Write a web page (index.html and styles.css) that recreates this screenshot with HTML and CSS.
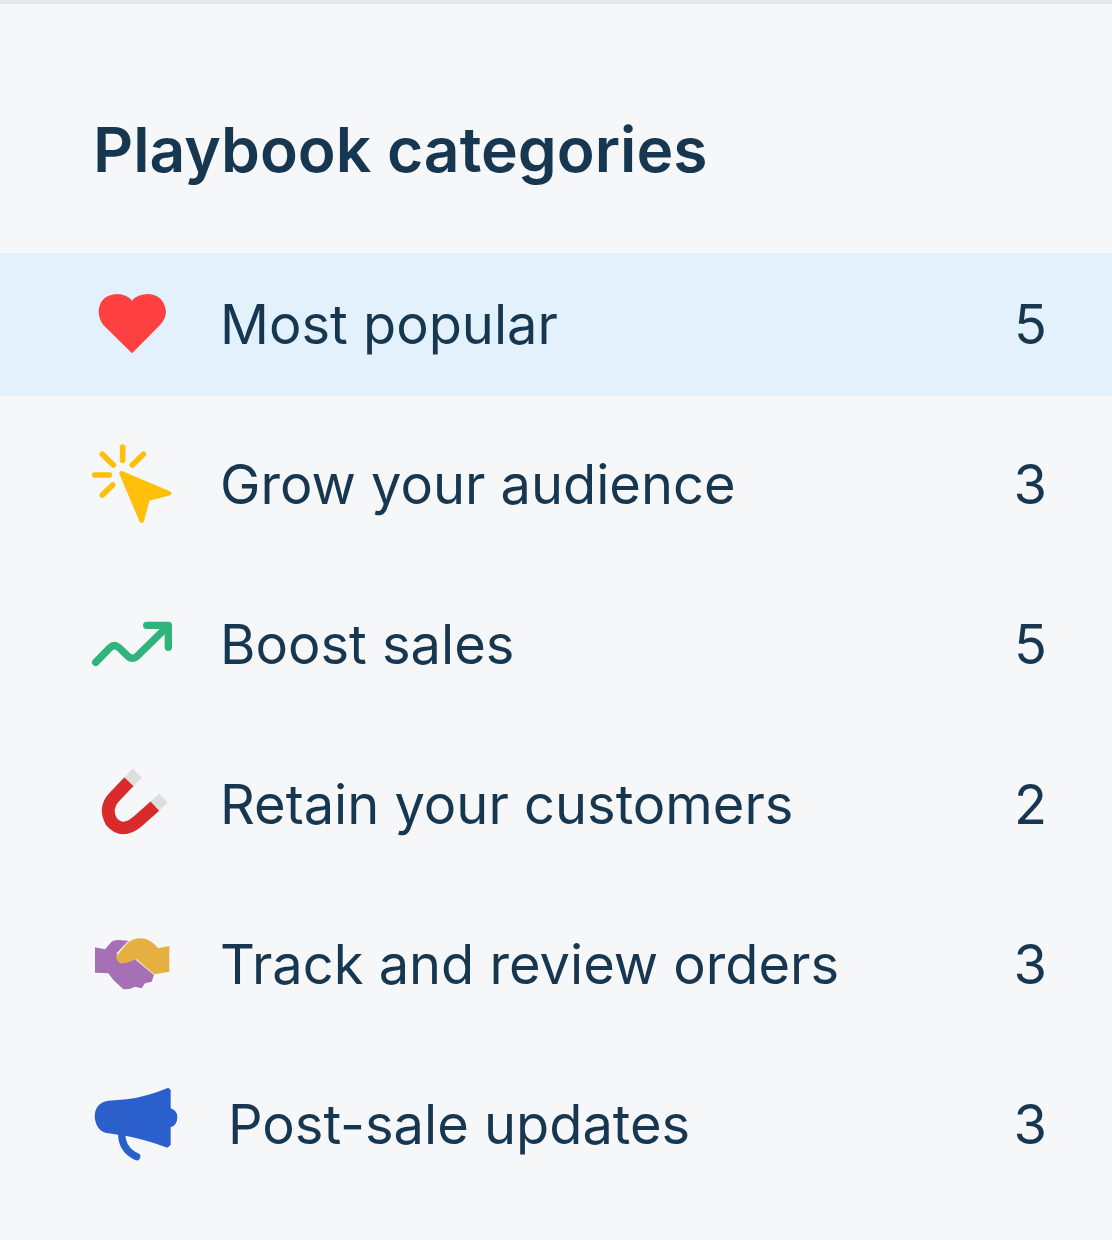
FILE: index.html
```html
<!DOCTYPE html>
<html lang="en">
<head>
    <meta charset="UTF-8">
    <title>Playbook categories</title>
    <link rel="stylesheet" href="styles.css">
</head>
<body>

    <aside class="sidebar">
        <h2>Playbook categories</h2>
        <ul class="category-list">
            <li class="category active">
                <svg class="icon" viewBox="36 45 240 240"><path fill="#ff4040" d="M156 250 L70 165 Q55 145 56 120 Q62 75 110 72 Q140 72 156 92 Q172 72 205 72 Q252 75 258 125 Q258 145 240 165 Z"/></svg>
                <span class="name">Most popular</span>
                <span class="count">5</span>
            </li>
            <li class="category">
                <svg class="icon" viewBox="36 525 240 240"><g fill="none" stroke="#ffbf0b" stroke-width="17" stroke-linecap="round"><path d="M128 531 V571"/><path d="M67 553 L100 585"/><path d="M190 553 L157 585"/><path d="M44 615 H88"/><path d="M67 675 L98 645"/></g><path fill="#ffbf0b" stroke="#ffbf0b" stroke-width="14" stroke-linejoin="round" d="M125 610 L267 670 L203 686 L185 752 Z"/></svg>
                <span class="name">Grow your audience</span>
                <span class="count">3</span>
            </li>
            <li class="category">
                <svg class="icon" viewBox="36 15 240 240"><g fill="none" stroke="#2fb57b" stroke-width="22" stroke-linecap="round" stroke-linejoin="round"><path d="M47 187 L90 143 Q103 131 117 143 L145 170 Q157 180 170 170 L262 80"/><path d="M200 76 H265 V142"/></g></svg>
                <span class="name">Boost sales</span>
                <span class="count">5</span>
            </li>
            <li class="category">
                <svg class="icon" viewBox="36 495 240 240"><path fill="none" stroke="#d92b2b" stroke-width="38" d="M147 545 L102 592 Q72 625 94 665 Q127 703 172 665 L225 618"/><path fill="none" stroke="#dedede" stroke-width="38" d="M147 545 L172 519"/><path fill="none" stroke="#dedede" stroke-width="38" d="M225 618 L250 594"/></svg>
                <span class="name">Retain your customers</span>
                <span class="count">2</span>
            </li>
            <li class="category">
                <svg class="icon" viewBox="36 15 240 240"><path fill="#a770b5" d="M45 82 L75 88 L95 65 Q100 60 115 60 L145 62 L110 100 L120 130 L165 118 L222 165 L215 185 L195 190 L185 205 L165 200 L150 207 L130 208 L100 180 L85 160 L45 158 Z"/><path fill="#e6b040" d="M143 68 Q160 55 185 55 Q210 56 235 85 L268 78 V155 L222 163 L170 118 L135 130 Q110 130 108 110 Z"/></svg>
                <span class="name">Track and review orders</span>
                <span class="count">3</span>
            </li>
            <li class="category wide-icon">
                <svg class="icon" viewBox="36 495 240 240"><path fill="#2b5fcc" d="M272 510 L265 503 Q200 530 140 538 L85 542 Q45 548 44 590 Q48 635 85 640 L140 648 Q200 660 262 683 L272 675 V622 Q292 615 292 590 Q290 570 272 565 Z"/><path fill="none" stroke="#2b5fcc" stroke-width="22" stroke-linecap="round" d="M125 640 Q125 690 170 710"/></svg>
                <span class="name">Post-sale updates</span>
                <span class="count">3</span>
            </li>
        </ul>
    </aside>

</body>
</html>
```

FILE: styles.css
```css
body {
    margin: 0;
    background-color: #f6f7f9;
    font-family: 'Inter', sans-serif;
    color: #17364f;
}
.sidebar {
    border-top: 4px solid #e3e7ee;
    height: 1236px;
    box-sizing: border-box;
    overflow: hidden;
}
h2 {
    margin: 0;
    padding: 112px 0 0 93px;
    font-size: 62.3px;
    line-height: 68px;
    font-weight: 600;
}
.category-list {
    list-style: none;
    margin: 69px 0 0;
    padding: 0;
    display: grid;
    gap: 17px;
}
.category {
    display: flex;
    align-items: center;
    height: 143px;
    padding: 0 65px 0 92px;
    font-size: 54.2px;
}
.category.active {
    background-color: #e3f1fd;
}
.icon {
    width: 80px;
    height: 80px;
    margin-right: 48px;
    flex-shrink: 0;
    overflow: visible;
}
.wide-icon .icon {
    margin-right: 56px;
}
.name {
    flex: 1;
    padding-bottom: 2px;
}
.count {
    padding-bottom: 2px;
}
```
